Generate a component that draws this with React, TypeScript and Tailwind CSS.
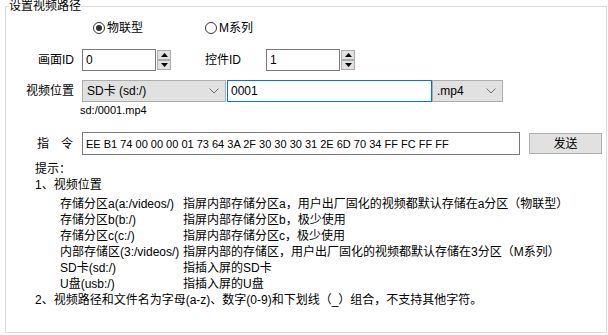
const font = "font-['Liberation_Sans','Noto_Sans_CJK_SC',sans-serif]";

const hints = [
	['存储分区a(a:/videos/)', '指屏内部存储分区a，用户出厂固化的视频都默认存储在a分区（物联型）'],
	['存储分区b(b:/)', '指屏内部存储分区b，极少使用'],
	['存储分区c(c:/)', '指屏内部存储分区c，极少使用'],
	['内部存储区(3:/videos/)', '指屏内部的存储区，用户出厂固化的视频都默认存储在3分区（M系列）'],
	['SD卡(sd:/)', '指插入屏的SD卡'],
	['U盘(usb:/)', '指插入屏的U盘'],
];

const Radio = ({ label, checked }: { label: string; checked?: boolean }) => (
	<label className="flex items-center gap-[2px]">
		<span className="w-[12px] h-[12px] rounded-full border border-[#333] flex items-center justify-center">
			{checked && <span className="w-[6px] h-[6px] rounded-full bg-[#333]" />}
		</span>
		<span className="text-[12px] leading-[14px]">{label}</span>
	</label>
);

const Arrow = ({ up }: { up?: boolean }) => (
	<svg width="7" height="4" viewBox="0 0 7 4">
		<path d={up ? 'M3.5 0L7 4H0Z' : 'M0 0H7L3.5 4Z'} fill="#000" />
	</svg>
);

const Spinner = () => (
	<div className="flex flex-col justify-between w-[15px] h-[22px] py-[1px] pl-[1px]">
		<button className="h-[10px] border border-[#adadad] bg-[#e1e1e1] flex items-center justify-center">
			<Arrow up />
		</button>
		<button className="h-[10px] border border-[#adadad] bg-[#e1e1e1] flex items-center justify-center">
			<Arrow />
		</button>
	</div>
);

const NumberField = ({ value }: { value: string }) => (
	<div className="flex items-center">
		<input
			readOnly
			value={value}
			className="w-[74px] h-[22px] border border-[#7a7a7a] px-[3px] text-[12px] outline-none"
		/>
		<Spinner />
	</div>
);

// windows style thin chevron
const Chevron = () => (
	<svg width="10" height="6" viewBox="0 0 10 6">
		<path d="M0.5 0.5L5 5L9.5 0.5" fill="none" stroke="#707070" strokeWidth="1" />
	</svg>
);

const Select = ({ value, width }: { value: string; width: string }) => (
	<div
		className={`${width} h-[22px] border border-[#adadad] bg-[#e1e1e1] flex items-center justify-between pl-[4px] pr-[6px] text-[12px]`}>
		<span>{value}</span>
		<Chevron />
	</div>
);

export default function App() {
	return (
		<div
			className={`w-[608px] h-[335px] bg-white text-black text-[12px] leading-[14px] pl-[5px] overflow-hidden ${font}`}>
			<fieldset className="w-[602px] h-[333px] border border-[#dcdcdc]">
				<legend className="ml-[3px] text-[12px] leading-[13px]">设置视频路径</legend>

				<div className="flex items-center h-[22px] mt-[4px] pl-[87px]">
					<div className="w-[112px]">
						<Radio label="物联型" checked />
					</div>
					<Radio label="M系列" />
				</div>

				<div className="flex items-center h-[22px] mt-[10px]">
					<span className="w-[76px] pr-[8px] text-right">画面ID</span>
					<NumberField value="0" />
					<span className="ml-[34px] w-[61px]">控件ID</span>
					<NumberField value="1" />
				</div>

				<div className="flex items-center h-[22px] mt-[9px]">
					<span className="w-[76px] pr-[8px] text-right">视频位置</span>
					<Select value="SD卡 (sd:/)" width="w-[144px]" />
					<input
						readOnly
						value="0001"
						className="ml-[1px] w-[205px] h-[22px] border border-[#0078d7] px-[3px] text-[12px] outline-none"
					/>
					<Select value=".mp4" width="w-[71px]" />
				</div>

				<div className="ml-[74px] mt-[1px] h-[14px] text-[11px] leading-[14px]">sd:/0001.mp4</div>

				<div className="flex items-center h-[23px] mt-[15px]">
					<span className="w-[76px] pr-[9px] text-right">指　令</span>
					<input
						readOnly
						value="EE B1 74 00 00 00 01 73 64 3A 2F 30 30 30 31 2E 6D 70 34 FF FC FF FF"
						className="w-[438px] h-[23px] border border-[#7a7a7a] px-[3px] text-[11px] outline-none"
					/>
					<button className="ml-[9px] w-[73px] h-[21px] border border-[#adadad] bg-[#e1e1e1] text-[12px]">
						发送
					</button>
				</div>

				<div className="ml-[29px] mt-[6px] text-[12px] leading-[16px]">
					<div>提示：</div>
					<div>1、视频位置</div>
					<div className="mt-[3px] ml-[25px] grid grid-cols-[123px_1fr] leading-[16px] whitespace-nowrap">
						{hints.map(([a, b]) => (
							<div key={a} className="contents">
								<span>{a}</span>
								<span>{b}</span>
							</div>
						))}
					</div>
					<div>2、视频路径和文件名为字母(a-z)、数字(0-9)和下划线（_）组合，不支持其他字符。</div>
				</div>
			</fieldset>
		</div>
	);
}
